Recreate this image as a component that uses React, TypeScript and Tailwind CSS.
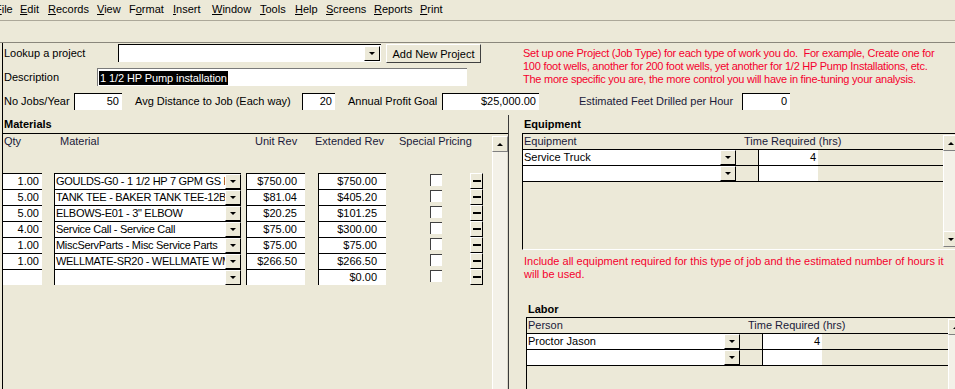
import React from "react";

const Down = () => (
  <div className="w-0 h-0 border-x-[3px] border-x-transparent border-t-[3px] border-t-black" />
);
const Up = () => (
  <div className="w-0 h-0 border-x-[3px] border-x-transparent border-b-[3px] border-b-black" />
);

const DropBtn = () => (
  <div className="w-[16px] h-[15px] shrink-0 flex items-center justify-center bg-[#ECE9D8] border-t border-l border-t-white border-l-white border-b border-r border-b-black border-r-black">
    <Down />
  </div>
);

const ScrollBtn = ({ up = true }: { up?: boolean }) => (
  <div className="w-[16px] h-[16px] shrink-0 flex items-center justify-center bg-[#ECE9D8] border-t border-l border-t-white border-l-white border-b border-r border-b-[#808080] border-r-[#808080]">
    {up ? <Up /> : <Down />}
  </div>
);

type Row = { q: string; m: string; u: string; e: string };
const rows: Row[] = [
  { q: "1.00", m: "GOULDS-G0 - 1 1/2 HP 7 GPM GS PUMP", u: "$750.00", e: "$750.00" },
  { q: "5.00", m: "TANK TEE - BAKER TANK TEE-12BA", u: "$81.04", e: "$405.20" },
  { q: "5.00", m: 'ELBOWS-E01 - 3" ELBOW', u: "$20.25", e: "$101.25" },
  { q: "4.00", m: "Service Call - Service Call", u: "$75.00", e: "$300.00" },
  { q: "1.00", m: "MiscServParts - Misc Service Parts", u: "$75.00", e: "$75.00" },
  { q: "1.00", m: "WELLMATE-SR20 - WELLMATE WM8", u: "$266.50", e: "$266.50" },
  { q: "", m: "", u: "", e: "$0.00" },
];

const MatRow = ({ r }: { r: Row }) => (
  <div className="flex h-[16px]">
    <div className="w-[39px] shrink-0 bg-white border-t border-black text-right pr-[3px] leading-[14px]">{r.q}</div>
    <div className="w-[12px] shrink-0" />
    <div className="w-[187px] shrink-0 bg-white border-t border-l border-black flex">
      <div className="flex-1 overflow-hidden whitespace-nowrap pl-[1px] leading-[14px] tracking-[-0.3px]">{r.m}</div>
      <DropBtn />
    </div>
    <div className="w-[5px] shrink-0" />
    <div className="w-[59px] shrink-0 bg-white border-t border-l border-black text-right pr-[8px] leading-[14px]">{r.u}</div>
    <div className="w-[13px] shrink-0" />
    <div className="w-[68px] shrink-0 bg-white border-t border-l border-black text-right pr-[9px] leading-[14px]">{r.e}</div>
    <div className="w-[44px] shrink-0" />
    <div className="w-[12px] h-[12px] mt-[1px] shrink-0 bg-white border-t border-l border-[#404040]" />
    <div className="w-[28px] shrink-0" />
    <div className="w-[13px] shrink-0 flex items-center justify-center bg-[#ECE9D8] border-t border-l border-t-white border-l-white border-b border-r border-b-black border-r-black">
      <div className="w-[8px] h-[2px] bg-black" />
    </div>
  </div>
);

const SubRow = ({ name, val }: { name: string; val: string }) => (
  <div className="flex h-[16px] border-b border-black">
    <div className="w-[213px] shrink-0 bg-white flex">
      <div className="flex-1 overflow-hidden whitespace-nowrap pl-[1px] leading-[15px]">{name}</div>
      <DropBtn />
    </div>
    <div className="w-[22px] shrink-0" />
    <div className="w-[60px] shrink-0 bg-white border-l border-black text-right pr-[2px] leading-[15px]">{val}</div>
  </div>
);

export default function App() {
  return (
    <div className="w-[955px] h-[389px] overflow-hidden bg-[#ECE9D8] text-black text-[11px] font-['Liberation_Sans',Arial,sans-serif] flex flex-col">
      {/* Menu bar */}
      <div className="h-[21px] shrink-0 flex items-start border-b border-[#aca899] whitespace-nowrap leading-[18px]">
        <span className="w-[25px] -ml-[5px] shrink-0"><u>F</u>ile</span>
        <span className="w-[28px] shrink-0"><u>E</u>dit</span>
        <span className="w-[49px] shrink-0"><u>R</u>ecords</span>
        <span className="w-[32px] shrink-0"><u>V</u>iew</span>
        <span className="w-[44px] shrink-0">F<u>o</u>rmat</span>
        <span className="w-[39px] shrink-0"><u>I</u>nsert</span>
        <span className="w-[48px] shrink-0"><u>W</u>indow</span>
        <span className="w-[35px] shrink-0"><u>T</u>ools</span>
        <span className="w-[31px] shrink-0"><u>H</u>elp</span>
        <span className="w-[48px] shrink-0"><u>S</u>creens</span>
        <span className="w-[46px] shrink-0"><u>R</u>eports</span>
        <span className="w-[30px] shrink-0"><u>P</u>rint</span>
      </div>
      {/* Toolbar area */}
      <div className="h-[22px] shrink-0 border-b border-[#8a877c]" />

      {/* Form */}
      <div className="flex-1 ml-[2px] border-l border-black flex flex-col min-h-0">
        {/* Top section */}
        <div className="flex h-[48px] shrink-0">
          <div className="w-[520px] shrink-0 flex flex-col">
            <div className="h-[24px] flex items-start pt-[1px]">
              <div className="w-[115px] shrink-0 pl-[1px] leading-[18px]">Lookup a project</div>
              <div className="w-[263px] h-[18px] shrink-0 bg-white border-t border-l border-black flex justify-end pt-[1px] pr-[1px]">
                <DropBtn />
              </div>
              <div className="ml-[5px] w-[95px] h-[19px] shrink-0 flex items-center justify-center bg-[#ECE9D8] border-t border-l border-t-white border-l-white border-b border-r border-b-[#404040] border-r-[#404040] leading-[16px]">
                Add New Project
              </div>
            </div>
            <div className="h-[24px] flex items-start pt-[1px]">
              <div className="w-[94px] shrink-0 pl-[1px] leading-[18px]">Description</div>
              <div className="w-[370px] h-[18px] shrink-0 bg-white border-t border-l border-[#7a7a7a] pl-[1px] pt-[1px]">
                <span className="bg-black text-white leading-[14px] inline-block px-[1px] tracking-[-0.1px]">1 1/2 HP Pump installation</span>
              </div>
            </div>
          </div>
          <div className="mt-[4px] leading-[13px] text-[#f5002d] whitespace-nowrap tracking-[-0.25px]">
            Set up one Project (Job Type) for each type of work you do.&nbsp; For example, Create one for
            <br />
            100 foot wells, another for 200 foot wells, yet another for 1/2 HP Pump Installations, etc.
            <br />
            The more specific you are, the more control you will have in fine-tuning your analysis.
          </div>
        </div>

        {/* Row 3 */}
        <div className="h-[24px] shrink-0 flex items-start pt-[2px] whitespace-nowrap">
          <div className="w-[71px] shrink-0 pl-[1px] leading-[17px]">No Jobs/Year</div>
          <div className="w-[48px] h-[17px] shrink-0 bg-white border-t border-l border-black text-right pr-[3px] leading-[15px]">50</div>
          <div className="w-[180px] shrink-0 pl-[13px] leading-[17px]">Avg Distance to Job (Each way)</div>
          <div className="w-[33px] h-[17px] shrink-0 bg-white border-t border-l border-black text-right pr-[3px] leading-[15px]">20</div>
          <div className="w-[107px] shrink-0 pl-[13px] leading-[17px]">Annual Profit Goal</div>
          <div className="w-[97px] h-[17px] shrink-0 bg-white border-t border-l border-black text-right pr-[3px] leading-[15px]">$25,000.00</div>
          <div className="w-[203px] shrink-0 pl-[40px] leading-[17px] text-[#1a1a3a]">Estimated Feet Drilled per Hour</div>
          <div className="w-[48px] h-[17px] shrink-0 bg-white border-t border-l border-black text-right pr-[3px] leading-[15px]">0</div>
        </div>

        {/* Main section */}
        <div className="flex flex-1 min-h-0">
          {/* Materials */}
          <div className="w-[505px] shrink-0 flex flex-col">
            <div className="h-[18px] shrink-0 pl-[1px] leading-[18px] font-bold">Materials</div>
            <div className="flex-1 flex border-t border-black min-h-0">
              <div className="w-[489px] shrink-0 flex flex-col">
                <div className="h-[39px] shrink-0 flex pt-[1px] leading-[13px] text-[#1a1a3a]">
                  <span className="w-[57px] shrink-0 pl-[1px]">Qty</span>
                  <span className="w-[195px] shrink-0">Material</span>
                  <span className="w-[60px] shrink-0">Unit Rev</span>
                  <span className="w-[84px] shrink-0">Extended Rev</span>
                  <span className="whitespace-nowrap">Special Pricing</span>
                </div>
                {rows.map((r, i) => (
                  <MatRow key={i} r={r} />
                ))}
              </div>
              <div className="w-[16px] shrink-0 flex flex-col pt-[2px]">
                <ScrollBtn up />
                <div className="flex-1 bg-[#f3f1e8] border-l border-white border-r border-r-[#d8d5c8]" />
              </div>
            </div>
          </div>
          <div className="w-[1px] shrink-0 bg-[#3a3a3a]" />

          {/* Right column */}
          <div className="flex-1 overflow-hidden flex flex-col">
            <div className="h-[18px] shrink-0 pl-[15px] leading-[18px] font-bold">Equipment</div>
            <div className="ml-[13px] w-[437px] h-[117px] shrink-0 flex border-t border-l border-black border-b border-b-white">
              <div className="w-[420px] shrink-0 flex flex-col">
                <div className="h-[16px] shrink-0 flex border-b border-black leading-[14px] text-[#1a1a3a]">
                  <span className="w-[221px] shrink-0 pl-[1px]">Equipment</span>
                  <span className="whitespace-nowrap">Time Required (hrs)</span>
                </div>
                <SubRow name="Service Truck" val="4" />
                <SubRow name="" val="" />
              </div>
              <div className="w-[16px] shrink-0 flex flex-col pt-[1px] pb-[2px]">
                <ScrollBtn up />
                <div className="flex-1 bg-[#f3f1e8] border-l border-white" />
                <ScrollBtn up={false} />
              </div>
            </div>
            <div className="mt-[5px] pl-[15px] leading-[13px] text-[#f5002d] whitespace-nowrap">
              Include all equipment required for this type of job and the estimated number of hours it
              <br />
              will be used.
            </div>
            <div className="mt-[20px] h-[16px] shrink-0 pl-[19px] leading-[16px] font-bold">Labor</div>
            <div className="ml-[17px] w-[437px] flex-1 flex border-t border-l border-black">
              <div className="w-[421px] shrink-0 flex flex-col">
                <div className="h-[16px] shrink-0 flex border-b border-black leading-[14px] text-[#1a1a3a]">
                  <span className="w-[221px] shrink-0 pl-[1px]">Person</span>
                  <span className="whitespace-nowrap">Time Required (hrs)</span>
                </div>
                <SubRow name="Proctor Jason" val="4" />
                <SubRow name="" val="" />
              </div>
              <div className="w-[16px] shrink-0 flex flex-col pt-[1px]">
                <ScrollBtn up />
                <div className="flex-1 bg-[#f3f1e8] border-l border-white" />
              </div>
            </div>
          </div>
        </div>
      </div>
    </div>
  );
}
